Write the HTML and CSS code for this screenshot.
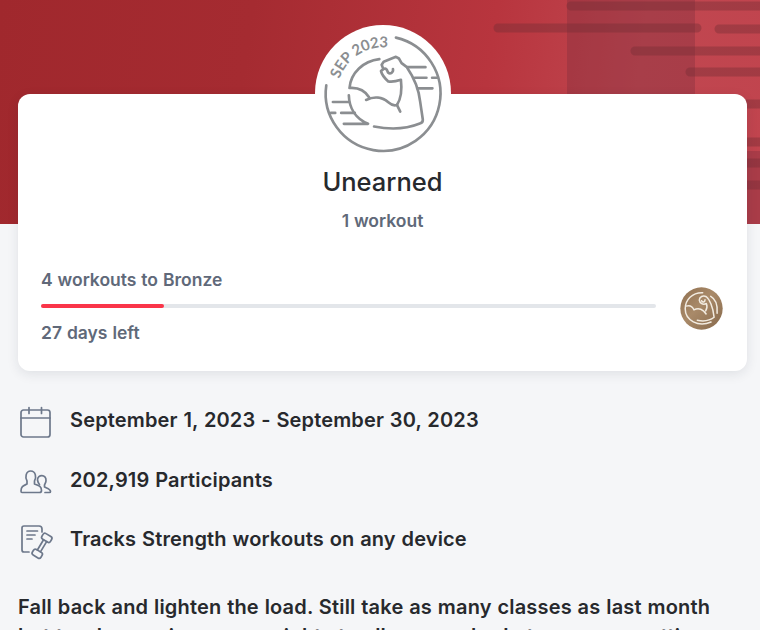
FILE: index.html
```html
<!DOCTYPE html>
<html lang="en">

<head>
    <meta charset="UTF-8">
    <meta name="viewport" content="width=device-width, initial-scale=1.0">
    <title>September Strength Challenge</title>
    <link rel="stylesheet" href="styles.css">
</head>

<body>

    <!-- Hero background -->
    <div class="hero">
        <svg class="hero-lines" viewBox="0 0 280 224" width="280" height="224">
            <rect class="hero-block" x="87" y="0" width="128" height="224" />
            <g class="hero-stripes">
                <path d="M91 6H290M18 28H217M239 29H290M155 51H290M210 72H290M250 104H290M250 142H290M250 163H290M250 185H290" />
            </g>
            <rect class="hero-block" x="260" y="151" width="30" height="73" />
        </svg>
    </div>

    <!-- Progress Card -->
    <section class="card">
        <svg class="badge" viewBox="14 15 410 410" width="136" height="136">
            <defs>
                <path id="badge-arc" d="M88 178A138 138 0 0 1 290 102" />
            </defs>
            <circle cx="219" cy="220" r="205" fill="#fff" />
            <text class="badge-text"><textPath href="#badge-arc" textLength="188">SEP 2023</textPath></text>
            <g class="badge-art">
                <path d="M48 197A173 173 0 1 0 258 53" />
                <path d="M208 118C160 124 122 158 118 205C142 203 164 212 177 233" />
                <path d="M168 241C192 229 217 232 235 248C244 256 253 259 261 256C275 235 276 205 273 180C261 184 246 187 235 185C227 178 215 163 213 154L220 148L215 135L221 126L258 111L267 116L275 130L291 142C315 177 327 208 331 246L339 300Q340 309 330 312C286 330 237 330 192 321" />
                <path d="M261 256L271 276M220 148C229 144 231 150 234 158C241 164 251 158 249 148" />
                <path d="M116 227C117 267 138 298 174 313H101" />
                <path d="M68 247H116M62 280H75M93 280H134M293 142H347M315 174H350M367 174H383M322 206H368" />
            </g>
        </svg>
        <h1>Unearned</h1>
        <p class="count">1 workout</p>
        <div class="progress">
            <div class="progress-info">
                <p>4 workouts to Bronze</p>
                <div class="bar">
                    <div class="bar-fill" style="width: 20%"></div>
                </div>
                <p>27 days left</p>
            </div>
            <svg class="medal" viewBox="62 50 127 128" width="43" height="43">
                <defs>
                    <linearGradient id="bronze" x1="0" y1="0" x2="1" y2="1">
                        <stop offset="0" stop-color="#8f6f50" />
                        <stop offset="0.45" stop-color="#a98a69" />
                        <stop offset="1" stop-color="#86684b" />
                    </linearGradient>
                </defs>
                <circle cx="125.500" cy="114" r="63" fill="url(#bronze)" />
                <g class="medal-art">
                    <path d="M129 67C98 66 77 88 77 115C77 149 116 171 154 154" />
                    <path d="M79 107C91 103 99 108 103 118C114 112 124 115 131 121L139 130M138 121C143 112 143 106 140 99C130 105 120 98 119 89C119 79 130 74 140 79C149 86 160 110 163 140C149 151 132 153 113 149" />
                    <path d="M153 78C166 85 174 103 172 128M126 91C128 97 136 96 136 88" />
                </g>
            </svg>
        </div>
    </section>

    <!-- Challenge Details -->
    <ul class="details">
        <li>
            <svg viewBox="0 0 34 34" width="34" height="34">
                <rect x="3" y="4" width="29" height="27" rx="2.500" />
                <path d="M3 12H32M11 1.500V7.500M23.500 1.500V7.500" />
            </svg>
            <span>September 1, 2023 - September 30, 2023</span>
        </li>
        <li>
            <svg viewBox="0 0 34 34" width="34" height="34">
                <path d="M4 27.500H21.500Q23.500 27.500 23.500 25.500C23.500 21 20.500 20.500 16.500 19V16C18.500 13 18 6 12.700 6C7.500 6 7 13 9 16V19C6 20.500 3 21 3 26Q3 27.500 4 27.500Z" />
                <path d="M19.500 15C19.500 9 28.500 9 28 15.500C28 17.500 27 18.500 26.500 20V22C30 23.500 32.500 24 32.500 26.500Q32.500 27.500 31.500 27.500H27M19.500 15Q20 18 21.500 19.500" />
            </svg>
            <span>202,919 Participants</span>
        </li>
        <li>
            <svg viewBox="0 0 34 36" width="34" height="36">
                <path d="M11 28H6Q4 28 4 26V4Q4 2 6 2H21Q24 2 24 5V8M9 7H19.500M9 11H17M9 15H14" />
                <g transform="translate(24 21.800) rotate(31)">
                    <rect x="-5" y="-12.500" width="10" height="6.500" rx="2.200" />
                    <rect x="-5" y="6" width="10" height="6.500" rx="2.200" />
                    <path d="M-1.800 -6V6M1.800 -6V6" />
                </g>
            </svg>
            <span>Tracks Strength workouts on any device</span>
        </li>
    </ul>

    <p class="description">Fall back and lighten the load. Still take as many classes as last month but try decreasing your weights to allow your body to recover, setting</p>

</body>

</html>
```

FILE: styles.css
```css
/* General Styles */
* {
    box-sizing: border-box;
}

body {
    font-family: Inter, sans-serif;
    margin: 0;
    height: 630px;
    overflow: hidden;
    background-color: #f5f6f8;
    color: #27292d;
    font-weight: 500;
}

h1,
p,
ul {
    margin: 0;
    padding: 0;
}

svg {
    display: block;
    flex-shrink: 0;
    overflow: visible;
}

/* Hero */
.hero {
    display: flex;
    justify-content: flex-end;
    height: 224px;
    overflow: hidden;
    background: linear-gradient(98deg, #a0282d 0%, #a52b31 32%, #b8353e 63%, #c04750 82%, #c1444e 100%);
}

.hero-block {
    fill: #772b3b;
    fill-opacity: 0.32;
}

.hero-stripes {
    fill: none;
    stroke: #722e35;
    stroke-opacity: 0.4;
    stroke-width: 9;
    stroke-linecap: round;
}

/* Progress Card */
.card {
    position: relative;
    display: flex;
    flex-direction: column;
    align-items: center;
    height: 277px;
    margin: -130px 13px 0 18px;
    padding: 0 23px;
    background-color: #fff;
    border-radius: 12px;
    box-shadow: 0 3px 12px rgba(30, 40, 55, 0.1);
}

.badge {
    margin-top: -69px;
}

.badge-art {
    fill: none;
    stroke: #8b8e91;
    stroke-width: 8;
    stroke-linecap: round;
    stroke-linejoin: round;
}

.badge-text {
    font-family: Lato, sans-serif;
    font-size: 45px;
    font-weight: 700;
    fill: #8b8e91;
}

.card h1 {
    margin-top: 4px;
    font-size: 25.5px;
    font-weight: 550;
    line-height: 34px;
}

.card p {
    font-size: 17.5px;
    font-weight: 600;
    line-height: 24px;
    word-spacing: 0.5px;
    color: #606979;
}

.card .count {
    margin-top: 10px;
}

.progress {
    display: flex;
    align-items: center;
    gap: 24px;
    width: 100%;
    margin-top: 35px;
    padding-right: 1px;
}

.progress-info {
    flex: 1;
}

.bar {
    height: 4px;
    margin: 12px 0 13px;
    border-radius: 2px;
    background-color: #e3e6ea;
}

.bar-fill {
    height: 4px;
    border-radius: 2px;
    background-color: #fa3549;
}

.medal {
    margin-top: 3px;
}

.medal-art {
    fill: none;
    stroke: #f2ebe0;
    stroke-width: 4.5;
    stroke-linecap: round;
    stroke-linejoin: round;
}

/* Challenge Details */
.details {
    display: flex;
    flex-direction: column;
    gap: 23.5px;
    margin: 31px 18px 0;
    list-style-type: none;
}

.details li {
    display: flex;
    align-items: center;
    gap: 18px;
    height: 36px;
    font-size: 20px;
    font-weight: 560;
    letter-spacing: 0.15px;
    word-spacing: 0.6px;
}

.details svg {
    margin-top: 5px;
    fill: none;
    stroke: #6d788b;
    stroke-width: 1.7;
    stroke-linecap: round;
    stroke-linejoin: round;
}

.description {
    margin: 36px 18px 0;
    font-size: 20px;
    font-weight: 560;
    line-height: 28.5px;
    letter-spacing: 0.17px;
    word-spacing: 0.6px;
}
```
